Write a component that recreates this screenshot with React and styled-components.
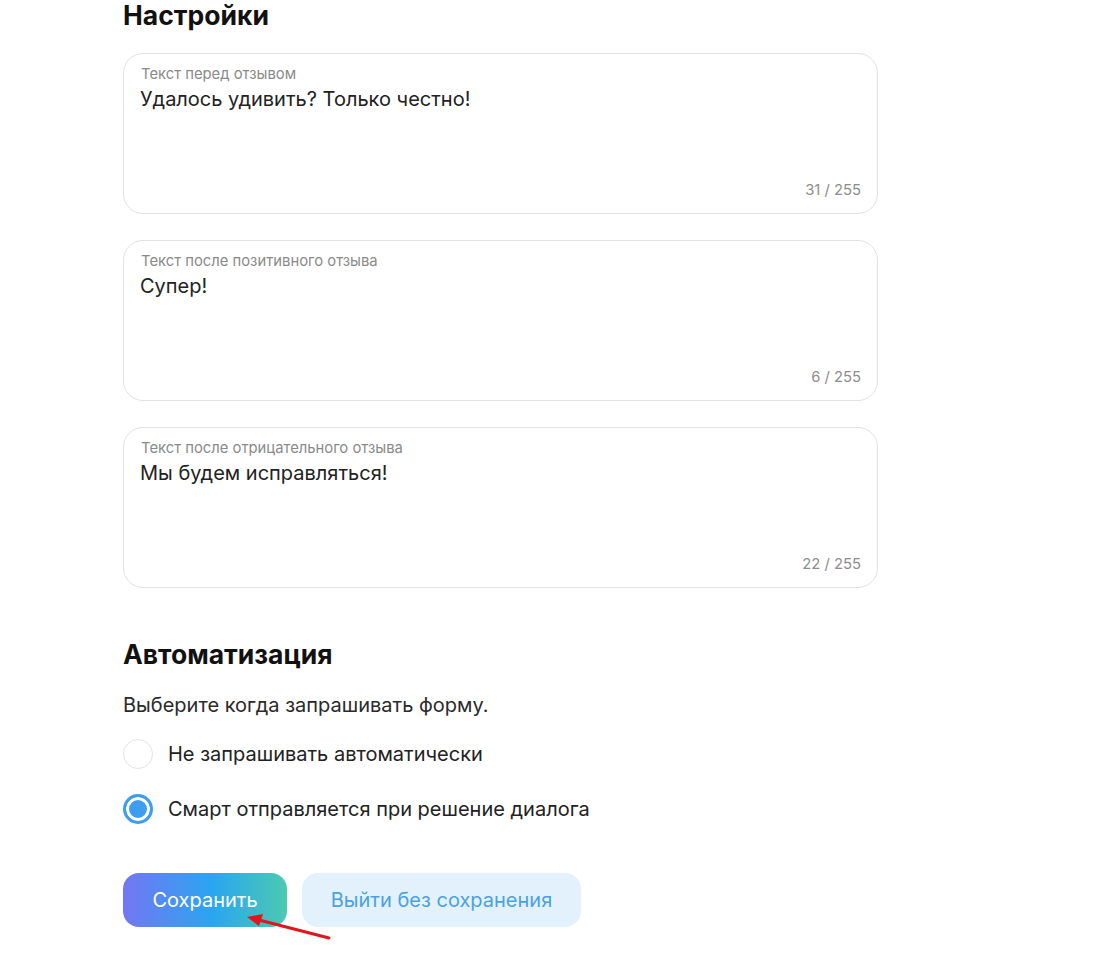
import styled, { createGlobalStyle } from 'styled-components'

const GlobalStyle = createGlobalStyle`
	body {
		margin: 0;
		background: #fff;
		font-family: Inter, 'Noto Sans', sans-serif;
		color: #1a1a1a;
	}
`

const fields = [
	{ label: 'Текст перед отзывом', value: 'Удалось удивить? Только честно!' },
	{ label: 'Текст после позитивного отзыва', value: 'Супер!' },
	{ label: 'Текст после отрицательного отзыва', value: 'Мы будем исправляться!' },
]

const options = [
	{ label: 'Не запрашивать автоматически', checked: false },
	{ label: 'Смарт отправляется при решение диалога', checked: true },
]

const App = () => {
	return (
		<>
			<GlobalStyle />
			<Page>
				<Heading>Настройки</Heading>
				<Fields>
					{fields.map((field) => (
						<FieldBox key={field.label}>
							<FieldLabel>{field.label}</FieldLabel>
							<FieldValue>{field.value}</FieldValue>
							<Counter>
								{field.value.length} / 255
							</Counter>
						</FieldBox>
					))}
				</Fields>
				<SectionHeading>Автоматизация</SectionHeading>
				<Hint>Выберите когда запрашивать форму.</Hint>
				<Options>
					{options.map((option) => (
						<Option key={option.label}>
							<Radio $checked={option.checked} />
							<OptionLabel>{option.label}</OptionLabel>
						</Option>
					))}
				</Options>
				<Actions>
					<SaveButton>Сохранить</SaveButton>
					<ExitButton>Выйти без сохранения</ExitButton>
					<Arrow width="90" height="30" viewBox="0 0 90 30">
						<line x1="84" y1="25" x2="14" y2="7" stroke="#e3141c" strokeWidth="3" strokeLinecap="round" />
						<polygon points="2,4 18,1 14,13" fill="#e3141c" />
					</Arrow>
				</Actions>
			</Page>
		</>
	)
}

export default App

const Page = styled.div`
	width: 755px;
	margin-left: 123px;
	padding-bottom: 30px;
`

const Heading = styled.h1`
	margin: 0;
	font-size: 26.5px;
	line-height: 30px;
	font-weight: 700;
	color: #111;
`

const Fields = styled.div`
	display: flex;
	flex-direction: column;
	gap: 26px;
	margin-top: 23px;
`

const FieldBox = styled.div`
	position: relative;
	box-sizing: border-box;
	height: 161px;
	border: 1px solid #e2e2e2;
	border-radius: 20px;
	padding: 11px 16px 0 16px;
	display: flex;
	flex-direction: column;
`

const FieldLabel = styled.div`
	font-size: 14.8px;
	line-height: 18px;
	color: #8a8a8a;
	padding-left: 1px;
`

const FieldValue = styled.div`
	font-size: 20px;
	line-height: 26px;
	margin-top: 3px;
	color: #222;
	flex: 1;
`

const Counter = styled.div`
	align-self: flex-end;
	font-size: 14.8px;
	line-height: 18px;
	color: #8d8d8d;
	margin-bottom: 14px;
`

const SectionHeading = styled.h2`
	margin: 51px 0 0 0;
	font-size: 26.5px;
	line-height: 30px;
	font-weight: 700;
	color: #111;
`

const Hint = styled.p`
	margin: 24px 0 0 0;
	font-size: 20px;
	line-height: 24px;
	color: #2a2a2a;
`

const Options = styled.div`
	display: flex;
	flex-direction: column;
	gap: 25px;
	margin-top: 22px;
`

const Option = styled.label`
	display: flex;
	align-items: center;
	gap: 15px;
`

const Radio = styled.span`
	box-sizing: border-box;
	width: 30px;
	height: 30px;
	border-radius: 50%;
	border: ${(p) => (p.$checked ? '3px solid #3d9ef0' : '1px solid #e3e3e3')};
	background: ${(p) => (p.$checked ? '#3d9ef0' : '#fff')};
	box-shadow: ${(p) => (p.$checked ? 'inset 0 0 0 3px #fff' : 'none')};
	flex-shrink: 0;
`

const OptionLabel = styled.span`
	font-size: 20px;
	line-height: 24px;
	color: #222;
`

const Actions = styled.div`
	position: relative;
	display: flex;
	gap: 15px;
	margin-top: 49px;
`

const BaseButton = styled.button`
	height: 54px;
	border: none;
	border-radius: 16px;
	font-family: Inter, 'Noto Sans', sans-serif;
	font-size: 20px;
	cursor: pointer;
`

const SaveButton = styled(BaseButton)`
	width: 164px;
	color: #fff;
	background: linear-gradient(90deg, #7476f3 0%, #2aa6f0 55%, #4bcab0 100%);
`

const ExitButton = styled(BaseButton)`
	width: 279px;
	color: #4ca2e0;
	background: #e2f1fc;
`

const Arrow = styled.svg`
	position: absolute;
	left: 122px;
	top: 40px;
	overflow: visible;
`
